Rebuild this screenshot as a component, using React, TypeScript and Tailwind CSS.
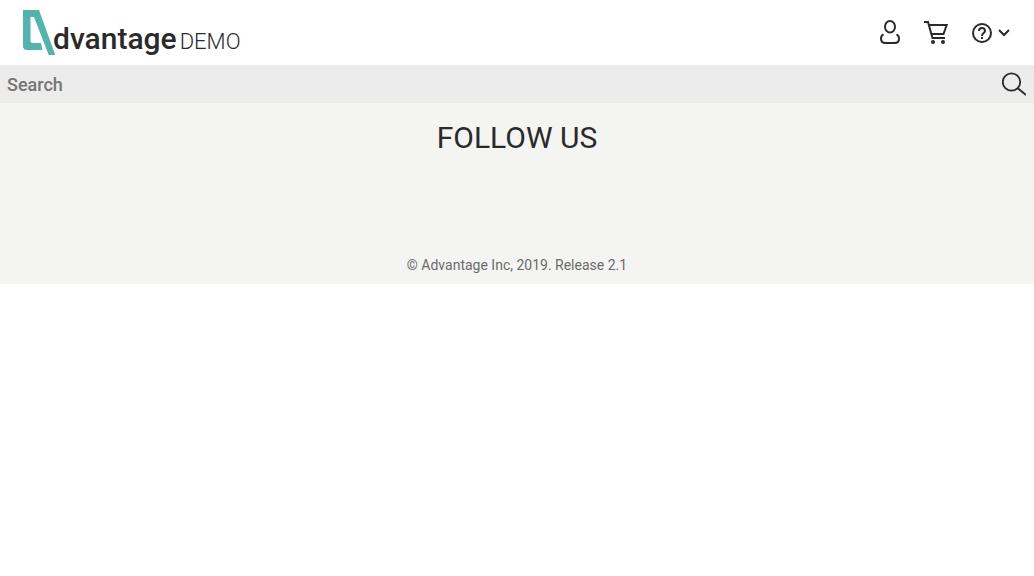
function Logo() {
  return (
    <a href="#" className="flex items-start text-[#2a2a2a]" aria-label="Advantage Demo home">
      <svg className="mt-[10px] h-[45px] w-[32px] shrink-0" viewBox="0 0 32 45" fill="#55b3ad" aria-hidden="true">
        <path d="M0 0H16L32.300 45H25.700L11 7H7.500V31Q7.500 33 9.500 33H18L19.500 40H4Q0 40 0 36Z" />
      </svg>
      <span className="-ml-[2px] flex items-baseline gap-[3px] pt-[19px] leading-10">
        <span className="text-[30px] font-medium">dvantage</span>
        <span className="text-[22px] font-light">DEMO</span>
      </span>
    </a>
  );
}

function UserIcon() {
  return (
    <svg className="h-6 w-5" viewBox="0 0 20 24" fill="none" stroke="#2a2a2a" strokeWidth="2" aria-hidden="true">
      <ellipse cx="10" cy="6.800" rx="5" ry="5.800" />
      <path d="M3.500 14.300C1.800 15.200 1 16.800 1 18.500C1 21.500 2.500 23 5.500 23H14.500C17.500 23 19 21.500 19 18.500C19 16.800 18.200 15.200 16.500 14.300" />
    </svg>
  );
}

function CartIcon() {
  return (
    <svg className="h-6 w-6" viewBox="0 0 24 24" fill="none" stroke="#2a2a2a" strokeWidth="2" aria-hidden="true">
      <path d="M0 2H4L8.500 18H21M5 5H22.700L19.500 14H7.500" />
      <circle cx="9" cy="22" r="2" fill="#2a2a2a" stroke="none" />
      <circle cx="19" cy="22" r="2" fill="#2a2a2a" stroke="none" />
    </svg>
  );
}

function HelpIcon() {
  return (
    <svg className="h-5 w-5" viewBox="0 0 20 20" fill="none" stroke="#2a2a2a" strokeWidth="2" aria-hidden="true">
      <circle cx="10" cy="10" r="9" />
      <path d="M7 8C7 3.900 13 3.900 13 8C13 10 10 10.300 10 13" />
      <path d="M10 14V16" />
    </svg>
  );
}

function ChevronIcon() {
  return (
    <svg className="h-2 w-3" viewBox="0 0 12 8" fill="none" stroke="#2a2a2a" strokeWidth="2" aria-hidden="true">
      <path d="M1 1L6 6L11 1" />
    </svg>
  );
}

function SearchIcon() {
  return (
    <svg className="h-6 w-6" viewBox="0 0 24 24" fill="none" stroke="#2a2a2a" strokeWidth="1.800" aria-hidden="true">
      <circle cx="9.500" cy="10" r="8.700" />
      <path d="M15.800 16.200L24 23" />
    </svg>
  );
}

export default function App() {
  return (
    <div className="min-h-screen bg-white font-[Roboto,sans-serif] text-[#2a2a2a]">
      <header>
        <div className="flex h-[65px] items-start justify-between pr-6 pl-[23px]">
          <Logo />
          <nav className="flex h-16 items-center gap-6" aria-label="Account">
            <button type="button" aria-label="User account">
              <UserIcon />
            </button>
            <button type="button" aria-label="Shopping cart">
              <CartIcon />
            </button>
            <button type="button" aria-label="Help" className="flex items-center gap-[6px] pt-0.5">
              <HelpIcon />
              <ChevronIcon />
            </button>
          </nav>
        </div>
        <form role="search" className="flex h-[38px] items-center bg-[#ececec] pr-2 pl-[7px]" onSubmit={(e) => e.preventDefault()}>
          <input
            type="text"
            aria-label="Search"
            placeholder="Search"
            className="min-w-0 flex-1 bg-transparent pt-0.5 text-lg font-medium outline-none placeholder:text-[#757575]"
          />
          <button type="submit" aria-label="Submit search">
            <SearchIcon />
          </button>
        </form>
      </header>
      <footer className="bg-[#f4f4f2] pt-3 pb-2 text-center">
        <h3 className="text-[30px] leading-[46px]">FOLLOW US</h3>
        <p className="mt-[94px] text-sm leading-[21px] text-[#6b6b6b]">© Advantage Inc, 2019. Release 2.1</p>
      </footer>
    </div>
  );
}
